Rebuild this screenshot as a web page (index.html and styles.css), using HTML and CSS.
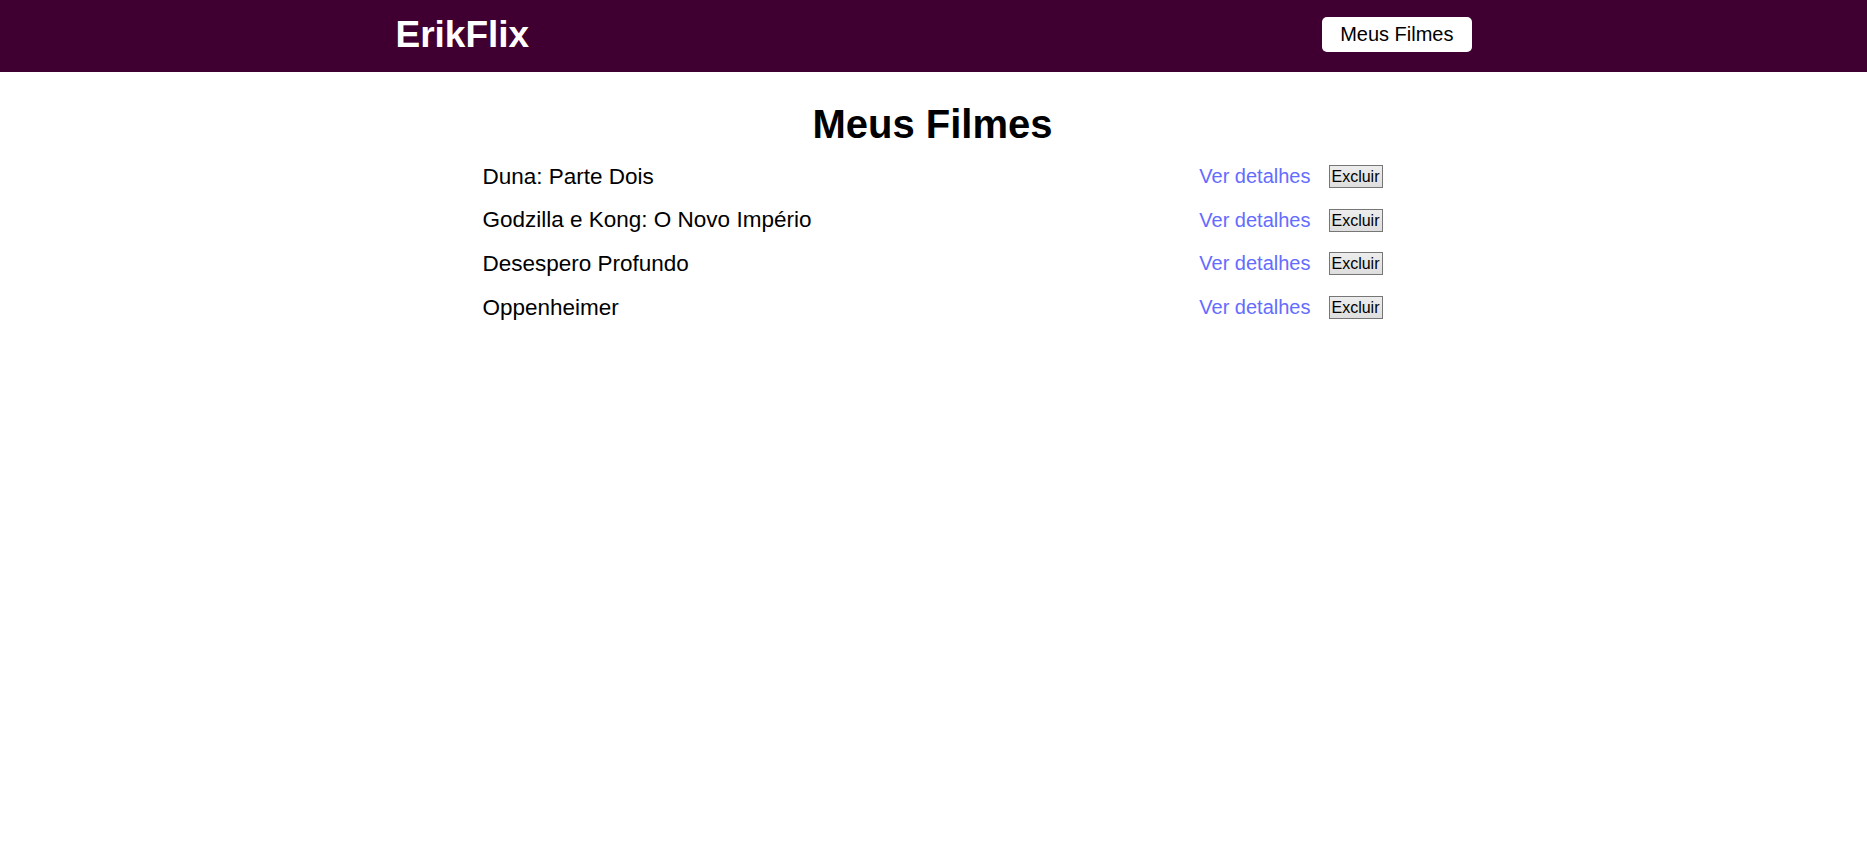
FILE: index.html
```html
<!DOCTYPE html>
<html lang="pt-BR">
<head>
<meta charset="utf-8">
<title>ErikFlix</title>
<link rel="stylesheet" href="styles.css">
</head>
<body>
  <header class="header">
    <div class="header-inner">
      <a class="logo" href="#">ErikFlix</a>
      <a class="nav-btn" href="#">Meus Filmes</a>
    </div>
  </header>
  <main class="content">
    <h1 class="title">Meus Filmes</h1>
    <ul class="movie-list">
      <li class="movie">
        <span class="movie-name">Duna: Parte Dois</span>
        <div class="actions"><a class="details" href="#">Ver detalhes</a><button class="delete">Excluir</button></div>
      </li>
      <li class="movie">
        <span class="movie-name">Godzilla e Kong: O Novo Império</span>
        <div class="actions"><a class="details" href="#">Ver detalhes</a><button class="delete">Excluir</button></div>
      </li>
      <li class="movie">
        <span class="movie-name">Desespero Profundo</span>
        <div class="actions"><a class="details" href="#">Ver detalhes</a><button class="delete">Excluir</button></div>
      </li>
      <li class="movie">
        <span class="movie-name">Oppenheimer</span>
        <div class="actions"><a class="details" href="#">Ver detalhes</a><button class="delete">Excluir</button></div>
      </li>
    </ul>
  </main>
</body>
</html>
```

FILE: styles.css
```css
* { box-sizing: border-box; }

html, body {
  margin: 0;
  padding: 0;
  background: #ffffff;
  font-family: "Liberation Sans", Arial, sans-serif;
  color: #000;
}

.header {
  background: #3f0031;
  height: 72px;
  padding-bottom: 3px;
  display: flex;
  align-items: center;
}

.header-inner {
  width: 1076px;
  margin: 0 auto;
  display: flex;
  align-items: center;
  justify-content: space-between;
}

.logo {
  color: #ffffff;
  text-decoration: none;
  font-weight: bold;
  font-size: 37px;
}

.nav-btn {
  background: #ffffff;
  color: #000;
  text-decoration: none;
  font-size: 20px;
  line-height: 23px;
  padding: 6px 18px;
  border-radius: 5px;
}

.content {
  width: 902px;
  padding-right: 2px;
  margin: 0 auto;
}

.title {
  text-align: center;
  font-size: 40px;
  font-weight: bold;
  margin: 29px 0 8px;
  line-height: 46px;
}

.movie-list {
  list-style: none;
  margin: 0;
  padding: 0;
}

.movie {
  height: 43.6px;
  display: flex;
  align-items: center;
  justify-content: space-between;
}

.movie-name {
  font-size: 22.5px;
}

.actions {
  display: flex;
  align-items: center;
  gap: 18px;
}

.details {
  color: #646cff;
  text-decoration: none;
  font-size: 20px;
}

.delete {
  font-family: "Liberation Sans", Arial, sans-serif;
  font-size: 16px;
  line-height: 19px;
  width: 54px;
  height: 23px;
  padding: 1px 0;
  border: 1px solid #767676;
  background: linear-gradient(#ededed, #dedede);
  color: #000;
  border-radius: 0;
  text-align: center;
}
```
